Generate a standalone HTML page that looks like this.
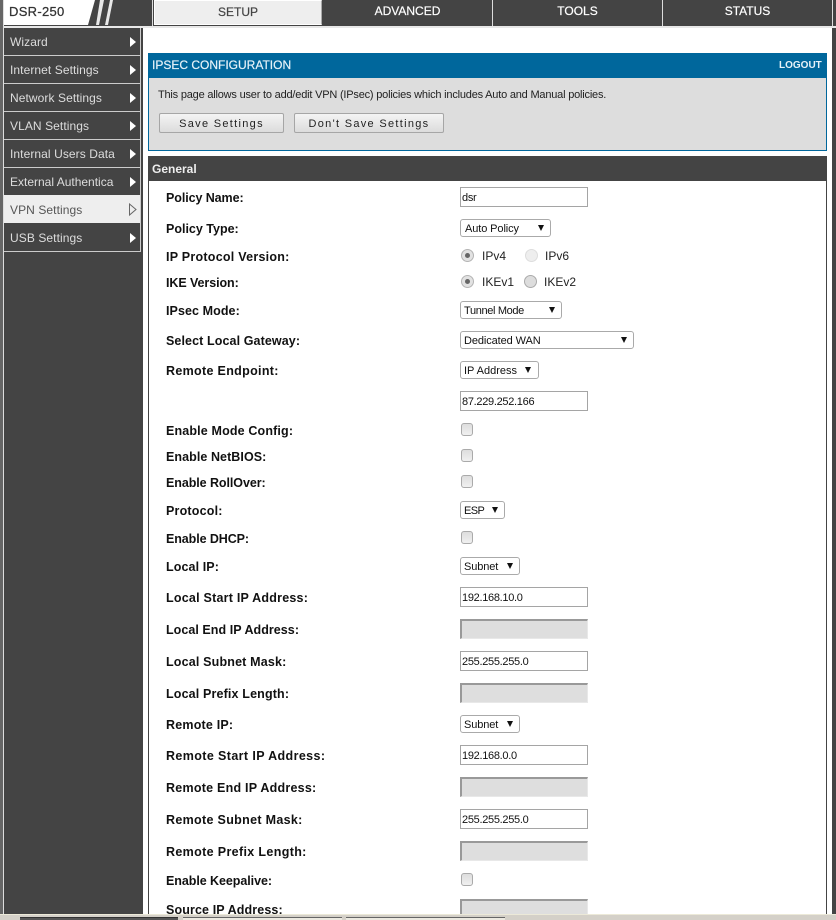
<!DOCTYPE html>
<html>
<head>
<meta charset="utf-8">
<style>
html,body{margin:0;padding:0;background:#fff;}
#p{position:relative;width:836px;height:920px;overflow:hidden;background:#fff;font-family:"Liberation Sans",sans-serif;color:#000;}
#p div,#p span.a{position:absolute;box-sizing:border-box;}
.nav{top:0;height:26px;background:#444;color:#fff;font-size:12px;line-height:23px;text-align:center;border-right:1px solid #ddd;-webkit-text-stroke:.2px;}
.m{left:4px;width:137px;height:27px;background:#444;color:#ddd;font-size:12px;line-height:29px;padding-left:6px;letter-spacing:.08px;white-space:nowrap;}
.ar{left:126px;width:0;height:0;border-left:6px solid #fff;border-top:5px solid transparent;border-bottom:5px solid transparent;}
.l{left:166px;font-weight:bold;line-height:16px;white-space:nowrap;color:#111;font-size:12.5px;margin-top:1px;}
.t{left:460px;width:128px;height:20px;border:1px solid #a5a5a5;background:#fff;font-size:11px;line-height:20px;padding-left:1px;color:#111;letter-spacing:-.3px;}
.d{left:460px;width:128px;height:20px;background:#dedede;border-top:2px solid #999;border-left:2px solid #999;border-right:1px solid #e8e8e8;border-bottom:1px solid #e8e8e8;}
.s{left:460px;height:18px;border:1px solid #aaa;border-radius:3px;background:#fff;font-size:11px;line-height:18px;padding-left:4px;color:#111;white-space:nowrap;letter-spacing:-.1px;}
.s i{position:absolute;top:5px;width:0;height:0;border-left:3.5px solid transparent;border-right:3.5px solid transparent;border-top:6px solid #111;}
.c{left:461px;width:12px;height:13px;border:1px solid #aaa;border-radius:3px;background:linear-gradient(#ddd,#f0f0f0);}
.r{width:13px;height:13px;border-radius:50%;border:1px solid #b4b4b4;background:#e2e2e2;}
.r b{position:absolute;left:3px;top:3px;width:5px;height:5px;border-radius:50%;background:#666;}
.x{font-size:12px;line-height:14px;color:#222;white-space:nowrap;}
.b{height:20px;top:113px;border:1px solid #a6a6a6;border-radius:2px;background:linear-gradient(#f4f4f4,#dcdcdc);font-size:11px;line-height:20px;text-align:center;letter-spacing:1.3px;color:#222;white-space:nowrap;}
</style>
</head>
<body>
<div id="p">
  <!-- frame backgrounds -->
  <div style="left:0;top:0;width:836px;height:27px;background:#444"></div>
  <div style="left:0;top:26px;width:836px;height:2px;background:#e8e8e8"></div>
  <div style="left:0;top:28px;width:143px;height:887px;background:#444"></div>
  <div style="left:0;top:0;width:3px;height:915px;background:#666"></div>
  <div style="left:3px;top:0;width:1px;height:915px;background:#ddd"></div>
  <div style="left:832px;top:28px;width:4px;height:887px;background:#444"></div>
  <div style="left:148px;top:181px;width:1px;height:733px;background:#444"></div>
  <div style="left:826px;top:181px;width:1px;height:733px;background:#444"></div>

  <!-- logo -->
  <svg style="position:absolute;left:0;top:0" width="120" height="26"><polygon points="4,0 95,0 88,25 4,25" fill="#fff"/><polygon points="100,0 104,0 99,25 96,25" fill="#e8e8e8"/><polygon points="110,0 113,0 108,25 105,25" fill="#e8e8e8"/></svg>
  <div style="left:9px;top:3px;font-size:13px;line-height:17px;color:#333;letter-spacing:.3px;white-space:nowrap;-webkit-text-stroke:.25px">DSR-250</div>

  <!-- nav -->
  <div class="nav" style="left:152px;width:1px;background:#ddd;border:0"></div>
  <div class="nav" style="left:154px;width:168px;height:25px;background:#eee;color:#444;border:1px solid #fff;border-right:1px solid #aaa">SETUP</div>
  <div class="nav" style="left:323px;width:170px">ADVANCED</div>
  <div class="nav" style="left:493px;width:170px">TOOLS</div>
  <div class="nav" style="left:663px;width:170px">STATUS</div>

  <!-- menu -->
  <div class="m" style="top:28px">Wizard</div><div class="ar" style="top:37px;left:130px"></div>
  <div style="left:4px;top:55px;width:137px;height:1px;background:#ccc"></div>
  <div class="m" style="top:56px">Internet Settings</div><div class="ar" style="top:65px;left:130px"></div>
  <div style="left:4px;top:83px;width:137px;height:1px;background:#ccc"></div>
  <div class="m" style="top:84px">Network Settings</div><div class="ar" style="top:93px;left:130px"></div>
  <div style="left:4px;top:111px;width:137px;height:1px;background:#ccc"></div>
  <div class="m" style="top:112px">VLAN Settings</div><div class="ar" style="top:121px;left:130px"></div>
  <div style="left:4px;top:139px;width:137px;height:1px;background:#ccc"></div>
  <div class="m" style="top:140px">Internal Users Data</div><div class="ar" style="top:149px;left:130px"></div>
  <div style="left:4px;top:167px;width:137px;height:1px;background:#ccc"></div>
  <div class="m" style="top:168px;letter-spacing:0">External Authentica</div><div class="ar" style="top:177px;left:130px"></div>
  <div class="m" style="top:195px;height:28px;background:#eee;color:#555;line-height:30px">VPN Settings</div>
  <svg style="position:absolute;left:128px;top:203px" width="10" height="14"><polygon points="1.5,1 8,6.5 1.5,12" fill="#eee" stroke="#666"/></svg>
  <div class="m" style="top:224px">USB Settings</div><div class="ar" style="top:233px;left:130px"></div>
  <div style="left:4px;top:251px;width:137px;height:1px;background:#ccc"></div>
  <div style="left:140px;top:28px;width:1px;height:224px;background:#ccc"></div>

  <!-- header panel -->
  <div style="left:148px;top:53px;width:679px;height:98px;background:#ddd;border:1px solid #00679c;border-top:0"></div>
  <div style="left:148px;top:53px;width:679px;height:25px;background:#00679c"></div>
  <div style="left:152px;top:58px;font-size:12px;line-height:15px;color:#e6f2f8;white-space:nowrap;-webkit-text-stroke:.2px">IPSEC CONFIGURATION</div>
  <div style="left:779px;top:59px;font-size:10px;font-weight:bold;line-height:13px;color:#e6f2f8;white-space:nowrap">LOGOUT</div>
  <div style="left:158px;top:88px;font-size:11px;line-height:15px;color:#222;white-space:nowrap;letter-spacing:-.2px">This page allows user to add/edit VPN (IPsec) policies which includes Auto and Manual policies.</div>
  <div class="b" style="left:159px;width:125px">Save Settings</div>
  <div class="b" style="left:294px;width:150px">Don't Save Settings</div>

  <!-- general -->
  <div style="left:148px;top:156px;width:679px;height:25px;background:#444"></div>
  <div style="left:152px;top:162px;font-size:12px;font-weight:bold;line-height:15px;color:#eee;white-space:nowrap">General</div>

  <div class="l" style="top:189px;letter-spacing:-.08px">Policy Name:</div>
  <div class="t" style="top:187px">dsr</div>
  <div class="l" style="top:220px">Policy Type:</div>
  <div class="s" style="top:219px;width:91px">Auto Policy<i style="left:77px"></i></div>
  <div class="l" style="top:248px;letter-spacing:.25px">IP Protocol Version:</div>
  <div class="r" style="left:461px;top:249px"><b></b></div><div class="x" style="left:482px;top:249px">IPv4</div>
  <div class="r" style="left:525px;top:249px;background:#eee;border-color:#ddd"></div><div class="x" style="left:545px;top:249px">IPv6</div>
  <div class="l" style="top:274px;letter-spacing:-.08px">IKE Version:</div>
  <div class="r" style="left:461px;top:275px"><b></b></div><div class="x" style="left:482px;top:275px">IKEv1</div>
  <div class="r" style="left:524px;top:275px;background:#ddd;border-color:#aaa"></div><div class="x" style="left:544px;top:275px">IKEv2</div>
  <div class="l" style="top:302px;letter-spacing:.08px">IPsec Mode:</div>
  <div class="s" style="top:301px;width:102px;padding-left:3px;letter-spacing:-.35px">Tunnel Mode<i style="left:88px"></i></div>
  <div class="l" style="top:332px;letter-spacing:.1px">Select Local Gateway:</div>
  <div class="s" style="top:331px;width:174px;padding-left:3px">Dedicated WAN<i style="left:160px"></i></div>
  <div class="l" style="top:362px;letter-spacing:.32px">Remote Endpoint:</div>
  <div class="s" style="top:361px;width:79px;padding-left:3px;letter-spacing:0">IP Address<i style="left:64px"></i></div>
  <div class="t" style="top:391px">87.229.252.166</div>
  <div class="l" style="top:422px;letter-spacing:.15px">Enable Mode Config:</div>
  <div class="c" style="top:423px"></div>
  <div class="l" style="top:448px;letter-spacing:.07px">Enable NetBIOS:</div>
  <div class="c" style="top:449px"></div>
  <div class="l" style="top:474px;letter-spacing:-.07px">Enable RollOver:</div>
  <div class="c" style="top:475px"></div>
  <div class="l" style="top:502px;letter-spacing:.2px">Protocol:</div>
  <div class="s" style="top:501px;width:45px;padding-left:3px;letter-spacing:-.6px">ESP<i style="left:31px"></i></div>
  <div class="l" style="top:530px;letter-spacing:-.09px">Enable DHCP:</div>
  <div class="c" style="top:531px"></div>
  <div class="l" style="top:558px;letter-spacing:.1px">Local IP:</div>
  <div class="s" style="top:557px;width:60px;padding-left:3px">Subnet<i style="left:46px"></i></div>
  <div class="l" style="top:589px;letter-spacing:.23px">Local Start IP Address:</div>
  <div class="t" style="top:587px">192.168.10.0</div>
  <div class="l" style="top:621px;letter-spacing:.05px">Local End IP Address:</div>
  <div class="d" style="top:619px"></div>
  <div class="l" style="top:653px;letter-spacing:.17px">Local Subnet Mask:</div>
  <div class="t" style="top:651px">255.255.255.0</div>
  <div class="l" style="top:685px;letter-spacing:.15px">Local Prefix Length:</div>
  <div class="d" style="top:683px"></div>
  <div class="l" style="top:716px;letter-spacing:.2px">Remote IP:</div>
  <div class="s" style="top:715px;width:60px;padding-left:3px">Subnet<i style="left:46px"></i></div>
  <div class="l" style="top:747px;letter-spacing:.39px">Remote Start IP Address:</div>
  <div class="t" style="top:745px">192.168.0.0</div>
  <div class="l" style="top:779px;letter-spacing:.24px">Remote End IP Address:</div>
  <div class="d" style="top:777px"></div>
  <div class="l" style="top:811px;letter-spacing:.32px">Remote Subnet Mask:</div>
  <div class="t" style="top:809px">255.255.255.0</div>
  <div class="l" style="top:843px;letter-spacing:.35px">Remote Prefix Length:</div>
  <div class="d" style="top:841px"></div>
  <div class="l" style="top:872px;letter-spacing:-.06px">Enable Keepalive:</div>
  <div class="c" style="top:873px"></div>
  <div class="l" style="top:901px;letter-spacing:.12px">Source IP Address:</div>
  <div class="d" style="top:899px"></div>

  <!-- status bar -->
  <div style="left:0;top:914px;width:836px;height:6px;background:#d4d0c8;border-top:1px solid #ece9d8"></div>
  <div style="left:20px;top:917px;width:158px;height:3px;background:#555;border-top:1px solid #333"></div>
  <div style="left:183px;top:917px;width:159px;height:3px;background:#ece9e0;border-top:1px solid #666"></div>
  <div style="left:346px;top:917px;width:159px;height:3px;background:#ece9e0;border-top:1px solid #666"></div>
</div>
</body>
</html>
